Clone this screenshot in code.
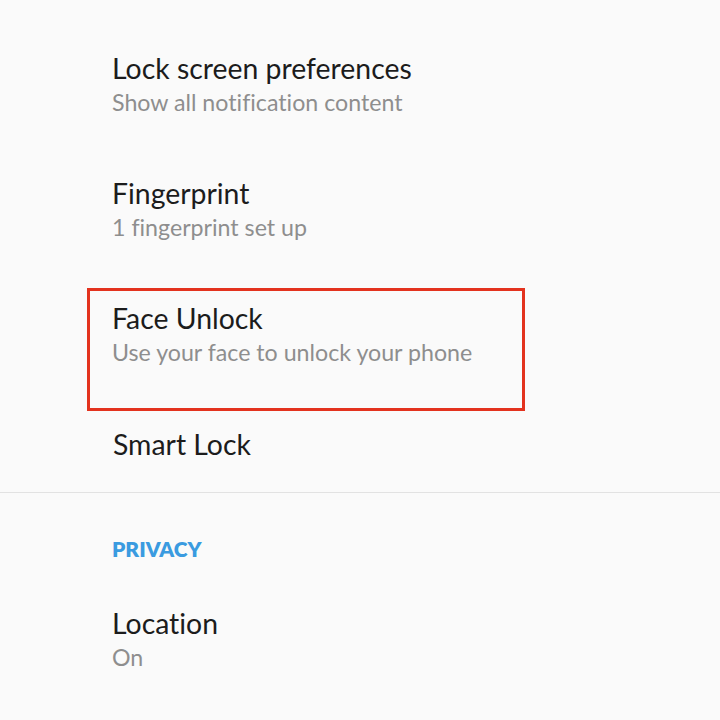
import React from "react";

const font = { fontFamily: '"Lato", "Open Sans", sans-serif' };

function Item({ title, subtitle, children }) {
  return (
    <div className="relative h-[125px] pl-[112px] pt-[51px]">
      {children}
      <div className="text-[28.4px] leading-[34px] text-[#1c1c1c]">{title}</div>
      {subtitle && (
        <div className="text-[23.2px] leading-[34px] text-[#8e8e8e]">{subtitle}</div>
      )}
    </div>
  );
}

export default function App() {
  return (
    <div
      className="w-[720px] h-[720px] overflow-hidden bg-[#fafafa] [font-variant-ligatures:none]"
      style={font}
    >
      <Item title="Lock screen preferences" subtitle="Show all notification content" />
      <Item title="Fingerprint" subtitle="1 fingerprint set up" />
      <Item title="Face Unlock" subtitle="Use your face to unlock your phone">
        <div className="absolute left-[87px] top-[38px] w-[438px] h-[123px] border-[3px] border-[#e3321e] pointer-events-none" />
      </Item>
      <div className="pl-[113px] pt-[52px] pb-[31px]">
        <div className="text-[28.4px] leading-[34px] text-[#1c1c1c]">Smart Lock</div>
      </div>
      <div className="h-px bg-[#e2e2e2]" />
      <div className="pl-[112px] pt-[43px] pb-[10px]">
        <div className="text-[21px] leading-[26px] font-extrabold text-[#3a9be0]">PRIVACY</div>
      </div>
      <div className="pl-[112px] pt-[34px]">
        <div className="text-[28.4px] leading-[34px] text-[#1c1c1c]">Location</div>
        <div className="text-[23.2px] leading-[34px] text-[#8e8e8e]">On</div>
      </div>
    </div>
  );
}
